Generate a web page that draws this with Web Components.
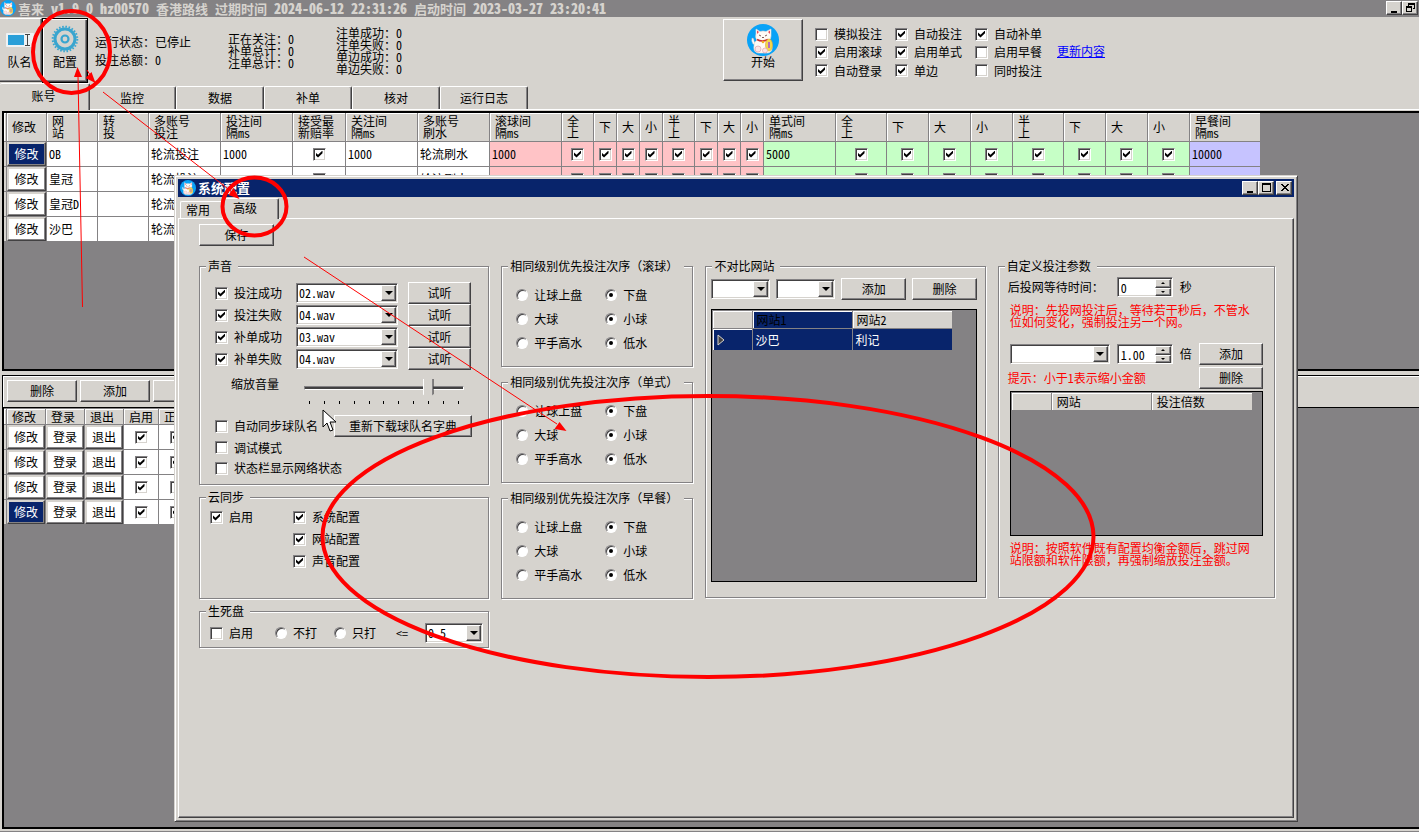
<!DOCTYPE html>
<html lang="zh-CN">
<head>
<meta charset="utf-8">
<title>喜来 v1.9.0</title>
<style>
  html, body { margin: 0; height: 100%; }
  body {
    --face: #d6d3ce; --shade: #848284; --dark: #424142; --navy: #08246b;
    background: var(--face); color: #000; overflow: hidden;
    font: 12px/12px "Noto Sans CJK SC", "Liberation Sans", sans-serif;
    font-feature-settings: "hwid";
  }
</style>
</head>
<body>
<main-window></main-window>
<config-dialog></config-dialog>
<mark-layer></mark-layer>

<script>
const BASE = `
  *, *::before, *::after { box-sizing: border-box; }
  button, input, select { font: inherit; font-feature-settings: inherit; color: inherit; margin: 0; border-radius: 0; }
  button { padding: 0; border: 1px solid; border-color: #fff var(--dark) var(--dark) #fff; box-shadow: inset -1px -1px 0 var(--shade); background: var(--face); }
  input[type=checkbox] { appearance: none; flex: none; width: 13px; height: 13px; background: #fff; display: grid; place-items: center;
    border: 1px solid; border-color: var(--shade) #fff #fff var(--shade); box-shadow: inset 1px 1px 0 var(--dark), inset -1px -1px 0 var(--face); }
  input[type=checkbox]:checked::before { content: ""; width: 7px; height: 7px; background: #000;
    clip-path: polygon(0 28%, 36% 60%, 100% 0, 100% 40%, 36% 100%, 0 68%); }
  input[type=radio] { appearance: none; flex: none; width: 12px; height: 12px; border-radius: 50%; background: #fff; display: grid; place-items: center;
    border: 1px solid; border-color: var(--shade) #fff #fff var(--shade); box-shadow: inset 1px 1px 0 var(--dark); }
  input[type=radio]:checked::before { content: ""; width: 4px; height: 4px; border-radius: 50%; background: #000; }
  label { white-space: nowrap; }
`;
function define(name, css, html) {
  const template = document.createElement('template');
  customElements.define(name, class extends HTMLElement {
    constructor() {
      super();
      const root = this.attachShadow({ mode: 'open' });
      const attr = (n, d = '') => this.getAttribute(n) ?? d;
      template.innerHTML = `<style>${BASE}${css}</style>` + (typeof html === 'function' ? html(attr) : html);
      root.append(template.content.cloneNode(true));
    }
  });
}

/* Lucky cat in a blue disc */
define('cat-logo', `:host { display: block; width: 16px; height: 16px; flex: none; border-radius: 50%; background: #08a2f7; } svg { display: block; width: 100%; height: 100%; }`, `
  <svg viewBox="0 0 32 32" aria-hidden="true">
    <path d="M6 20q-2-3-1-6 2 0 2 3l2 4z" fill="#fff" stroke="#cbb" stroke-width=".5"/>
    <path d="M9 5l4 2.500q3-1 6 0L24 5v7q0 3-2 4 3 2 3 6 1 6-4 7H11q-5-1-4-7 0-4 3-6-2-2-1-6z" fill="#fffaf5" stroke="#e8d8d0" stroke-width=".6"/>
    <path d="M10 6.500l2 1.500-2 2zM23 6.500l-2 1.500 2 2z" fill="#f04858"/>
    <path d="M12 11l2 1M18 12l2-1M15 13.500h2" stroke="#704848" stroke-width=".9" fill="none"/>
    <path d="M10 15.500q5 3 11 0" stroke="#d03030" stroke-width="1.600" fill="none"/>
    <circle cx="16" cy="18" r="1.300" fill="#f0b020"/>
    <ellipse cx="22" cy="21" rx="3.500" ry="6" fill="#f3d84c" stroke="#dba830" stroke-width=".6"/>
    <path d="M22 18v6" stroke="#b060c8" stroke-width="1.800"/>
    <circle cx="11" cy="25" r="3" fill="#fde4e4" stroke="#e0a0a8" stroke-width=".7"/>
    <circle cx="18" cy="26.500" r="2.500" fill="#fde4e4" stroke="#e0a0a8" stroke-width=".7"/>
  </svg>`);

/* Caption buttons of a window */
define('caption-button', `
  :host { display: block; width: 16px; height: 14px; }
  button { display: block; width: 100%; height: 100%; } svg { display: block; margin: 0 auto; }`,
  a => {
    const glyph = {
      min: ['最小化', '<path d="M3 9h6v2H3z"/>'],
      max: ['最大化', '<path d="M2 1h9v9H2zM3 3v6h7V3z" fill-rule="evenodd"/>'],
      restore: ['还原', '<path d="M4 1h7v6H9V6h1V3H5v1H4zM2 4h6v6H2zM3 6v3h4V6z" fill-rule="evenodd"/>'],
      close: ['关闭', '<path d="M2 2h2l2.500 2.500L9 2h2L7.500 5.500 11 9H9L6.500 6.500 4 9H2l3.500-3.500z"/>']
    }[a('kind')];
    return `<button type="button" aria-label="${glyph[0]}"><svg width="13" height="12" viewBox="0 0 13 12" shape-rendering="crispEdges">${glyph[1]}</svg></button>`;
  });

define('push-button', `:host { display: block; height: 22px; } button { display: block; width: 100%; height: 100%; white-space: nowrap; }`,
  `<button type="button"><slot></slot></button>`);

define('check-box', `:host { display: block; } label { display: flex; align-items: center; gap: 6px; }`,
  a => `<label><input type="checkbox" ${a('on', null) !== null ? 'checked' : ''}><span><slot></slot></span></label>`);

define('combo-box', `
  :host { display: grid; height: 20px; }
  select, i { grid-area: 1 / 1; }
  select { appearance: none; min-width: 0; width: 100%; height: 100%; padding: 0 20px 0 2px; background: #fff; outline: 0;
    border: 1px solid; border-color: var(--shade) #fff #fff var(--shade); box-shadow: inset 1px 1px 0 var(--dark), inset -1px -1px 0 var(--face); }
  i { justify-self: end; pointer-events: none; width: 15px; margin: 2px; background: var(--face); display: grid; place-items: center;
    border: 1px solid; border-color: #fff var(--dark) var(--dark) #fff; box-shadow: inset -1px -1px 0 var(--shade); }
  i::before { content: ""; border: 4px solid transparent; border-top-color: #000; border-bottom: 0; }`,
  a => `<select aria-label="${a('label')}"><option>${a('value')}</option></select><i></i>`);

define('spin-box', `
  :host { display: grid; grid-template-columns: 1fr 16px; width: 56px; height: 20px; background: #fff; padding: 1px;
    border: 1px solid; border-color: var(--shade) #fff #fff var(--shade); box-shadow: inset 1px 1px 0 var(--dark), inset -1px -1px 0 var(--face); }
  input { appearance: textfield; min-width: 0; width: 100%; border: 0; padding: 0 2px; background: none; outline: 0; }
  input::-webkit-inner-spin-button { display: none; }
  div { display: grid; grid-template-rows: 1fr 1fr; }
  button { display: grid; place-items: center; min-height: 0; }
  button::before { content: ""; border: 2px solid transparent; border-bottom-color: #000; border-top: 0; }
  button + button::before { border: 2px solid transparent; border-top-color: #000; border-bottom: 0; }`,
  a => `<input type="number" step="0.01" value="${a('value')}" aria-label="${a('label')}"><div><button type="button" aria-label="增加"></button><button type="button" aria-label="减少"></button></div>`);

define('group-box', `
  :host { display: flex; flex-direction: column; min-width: 0; }
  fieldset { flex: 1; min-width: 0; margin: 0; padding: 0; border: 1px solid var(--shade); box-shadow: 1px 1px 0 #fff, inset 1px 1px 0 #fff; }
  legend { margin-left: 6px; padding: 0 6px 0 2px; background: var(--face); white-space: nowrap; font-feature-settings: normal; }`,
  a => `<fieldset><legend>${a('caption')}</legend><slot></slot></fieldset>`);

/* Betting priority: three either-or choices */
define('priority-group', `
  :host { display: flex; flex-direction: column; min-height: 107px; }
  group-box { flex: 1; }
  .rows { display: grid; grid-template-columns: 89px 1fr; grid-auto-rows: 24px; align-items: center; padding: 11px 0 0 14px; }
  label { display: flex; align-items: center; gap: 6px; }`,
  a => `<group-box caption="相同级别优先投注次序（${a('kind')}）"><div class="rows">${
    [['让球上盘', '下盘'], ['大球', '小球'], ['平手高水', '低水']].map(([l, r], i) =>
      `<label><input type="radio" name="p${i}">${l}</label><label><input type="radio" name="p${i}" checked>${r}</label>`).join('')
  }</div></group-box>`);

/* Data grids */
const GRID = `
  :host { display: block; overflow: hidden; background: var(--shade); min-height: 0; }
  table { border-collapse: separate; border-spacing: 0; table-layout: fixed; }
  th { font-weight: 400; text-align: left; padding: 0 0 0 5px; background: var(--face); white-space: nowrap; overflow: hidden;
    border-right: 1px solid var(--shade); border-bottom: 1px solid var(--shade); box-shadow: inset 1px 1px 0 #fff; }
  td { height: 25px; padding: 0 0 0 2px; background: #fff; white-space: nowrap; overflow: hidden;
    border-right: 1px solid var(--shade); border-bottom: 1px solid var(--shade); }
  td.pink { background: #ffc3c6; } td.green { background: #c6ffc6; } td.violet { background: #c6c3ff; }
  td.act { padding: 0; } td.act button { display: block; width: 100%; height: 24px; background: #fff;
    border-color: var(--face) var(--dark) var(--dark) var(--face); box-shadow: inset -1px -1px 0 var(--shade), inset 1px 1px 0 var(--face); }
  td.act button.sel { background: var(--navy); color: #fff; }
  td.box { padding: 0; } td.box input { margin: 0 auto; }
  th.rowhead, td.rowhead { padding: 0; background: var(--face); }`;
const col = ws => `<colgroup>${ws.map(w => `<col style="width:${w}px">`).join('')}</colgroup>`;
const sum = ws => ws.reduce((a, b) => a + b, 0);

define('site-grid', GRID + ` th { height: 29px; }`, () => {
  const heads = ['修改', '网<br>站', '转<br>投', '多账号<br>投注', '投注间<br>隔ms', '接受最<br>新赔率', '关注间<br>隔ms', '多账号<br>刷水', '滚球间<br>隔ms',
    '全<br>上', '下', '大', '小', '半<br>上', '下', '大', '小', '单式间<br>隔ms', '全<br>上', '下', '大', '小', '半<br>上', '下', '大', '小', '早餐间<br>隔ms'];
  const ws = [3, 40, 51, 51, 72, 72, 53, 72, 72, 72, 32, 23, 23, 23, 32, 23, 23, 23, 72, 51, 42, 42, 42, 51, 42, 42, 42, 71];
  const tick = '<input type="checkbox" aria-label="启用" checked>';
  const rows = [['OB', '1000', '轮流刷水', '5000', '10000'], ['皇冠', '', '轮流刷水', '', ''], ['皇冠D', '', '', '', ''], ['沙巴', '', '', '', '']];
  const row = ([n, ms, wash, single, early], i) => `<tr><td class="rowhead"></td><td class="act"><button type="button" class="${i ? '' : 'sel'}">修改</button></td><td>${n}</td><td></td>
    <td>轮流投注</td><td>${ms}</td><td class="box">${tick}</td><td>${ms}</td><td>${wash}</td><td class="pink">${ms}</td>
    ${`<td class="box pink">${tick}</td>`.repeat(8)}<td class="green">${single}</td>${`<td class="box green">${tick}</td>`.repeat(8)}<td class="violet">${early}</td></tr>`;
  return `<table style="width:${sum(ws)}px">${col(ws)}<thead><tr><th class="rowhead"></th>${heads.map(h => `<th>${h}</th>`).join('')}</tr></thead>
    <tbody>${rows.map(row).join('')}</tbody></table>`;
});

define('account-grid', GRID + ` th { height: 16px; }`, () => {
  const ws = [3, 39, 39, 39, 35, 36];
  const row = i => `<tr><td class="rowhead"></td>${['修改', '登录', '退出'].map((t, j) =>
    `<td class="act"><button type="button" class="${i === 3 && !j ? 'sel' : ''}">${t}</button></td>`).join('')}
    <td class="box"><input type="checkbox" aria-label="启用" checked></td><td class="box"><input type="checkbox" aria-label="正" ${i === 2 ? '' : 'checked'}></td></tr>`;
  return `<table style="width:${sum(ws)}px">${col(ws)}<thead><tr><th class="rowhead"></th>${['修改', '登录', '退出', '启用', '正'].map(h => `<th>${h}</th>`).join('')}</tr></thead>
    <tbody>${[0, 1, 2, 3].map(row).join('')}</tbody></table>`;
});

define('pair-grid', GRID + `
  :host { border: 1px solid #000; padding: 1px; }
  th { height: 18px; padding-left: 3px; } td { height: 22px; background: var(--navy); color: #fff; }
  th.sel { background: var(--navy); } td.rowhead { background: var(--navy); padding-left: 4px; box-shadow: inset 1px 1px 0 #fff; }
  svg { display: block; }`, () => {
  const ws = [40, 100, 100];
  return `<table style="width:240px">${col(ws)}<thead><tr><th class="rowhead"></th><th class="sel">网站1</th><th>网站2</th></tr></thead>
    <tbody><tr><td class="rowhead"><svg width="9" height="12" aria-hidden="true"><path d="M1 1v10l6-5z" fill="#424142" stroke="#d6d3ce"/></svg></td><td>沙巴</td><td>利记</td></tr></tbody></table>`;
});

define('ratio-grid', GRID + ` :host { border: 1px solid #000; padding: 1px; } th { height: 17px; border-bottom: 0; } th:last-child { border-right: 0; }`, () => {
  const ws = [40, 100, 100];
  return `<table style="width:240px">${col(ws)}<thead><tr><th class="rowhead"></th><th>网站</th><th>投注倍数</th></tr></thead></table>`;
});

/* Toolbar */
define('tool-bar', `
  :host { display: flex; align-items: flex-start; padding-top: 1px; height: 66px; overflow: hidden; }
  button.big { flex: none; display: flex; flex-direction: column; align-items: center; background: var(--face); }
  .team { width: 42px; height: 64px; padding: 14px 2px 0 0; gap: 9px; border-left: 0; }
  .conf { width: 46px; height: 65px; padding: 6px 0 0 0; gap: 3px; border: 1px solid #000; box-shadow: inset 1px 1px 0 #fff, inset -1px -1px 0 var(--dark), inset -2px -2px 0 var(--shade); }
  .start { width: 80px; height: 62px; padding: 4px 0 0 0; margin-top: 1px; }
  .start cat-logo { width: 32px; height: 32px; }
  .stats { display: grid; grid-template-columns: 133px 108px 1fr; width: 635px; padding: 9px 0 0 7px; }
  .stats div { white-space: pre-line; }
  .a { line-height: 18px; padding-top: 6px; } .b { padding-top: 6px; }
  .opts { display: grid; grid-template-columns: repeat(3, 80px); grid-auto-rows: 18px; align-items: center; margin: 7px 0 0 12px; }
  .opts :nth-child(n+7) { margin-top: 1px; }
  a { color: #00f; margin: 27px 0 0 2px; white-space: nowrap; }
  svg { display: block; }`, () => {
  const opts = [['模拟投注', 0], ['自动投注', 1], ['自动补单', 1], ['启用滚球', 1], ['启用单式', 1], ['启用早餐', 0], ['自动登录', 1], ['单边', 1], ['同时投注', 0]];
  return `<button type="button" class="big team"><svg width="28" height="14" aria-hidden="true"><rect width="28" height="14" rx="1" fill="#eef2f4"/><rect x="2" y="2" width="16" height="10" fill="#2a9fd8"/><path d="M19 1.500h5M21.500 1.500v11M19 12.500h5" stroke="#444" fill="none"/></svg><span>队名</span></button>
  <button type="button" class="big conf"><svg width="28" height="28" viewBox="-14 -14 28 28" aria-hidden="true"><g fill="none" stroke="#39a5cf"><circle r="12.300" stroke-width="2" stroke-dasharray="1.600 1.620"/><circle r="10" stroke-width="3"/><circle r="3.500" stroke-width="2.200"/></g></svg><span>配置</span></button>
  <div class="stats"><div class="a">运行状态：已停止\n投注总额：0</div><div class="b">正在关注：0\n补单总计：0\n注单总计：0</div><div>注单成功：0\n注单失败：0\n单边成功：0\n单边失败：0</div></div>
  <button type="button" class="big start"><cat-logo></cat-logo><span>开始</span></button>
  <div class="opts">${opts.map(([t, c]) => `<check-box ${c ? 'on' : ''}>${t}</check-box>`).join('')}</div>
  <a href="#news">更新内容</a>`;
});

/* Main window */
define('main-window', `
  :host { display: flex; flex-direction: column; height: 100vh; }
  header { display: flex; align-items: flex-start; flex: none; height: 17px; background: var(--shade); color: var(--face); padding-right: 1px; font-size: 13px; line-height: 17px; font-weight: 700; }
  header span { flex: 1; padding-left: 2px; white-space: pre; } header b { font-size: 14px; }
  header caption-button { margin-top: 1px; }
  nav { display: flex; align-items: flex-end; flex: none; height: 27px; border-bottom: 1px solid #fff; }
  nav button { width: 88px; height: 23px; border-width: 1px 1px 0 1px; box-shadow: inset -1px 0 0 var(--shade); border-radius: 2px 2px 0 0; }
  nav button[aria-selected=true] { width: 90px; height: 27px; margin: 0 -2px -1px 0; padding: 0 2px 2px 0; border-left: 0; z-index: 1; }
  site-grid { flex: 256 1 0; margin: 1px 0 4px 2px; border: 2px solid #000; border-right: 0; }
  section { flex: 453 1 0; display: flex; flex-direction: column; margin-left: 2px; border: 1px solid #000; border-right: 0; border-bottom: 0; min-height: 0; }
  .bar { display: flex; gap: 3px; padding: 4px; height: 31px; flex: none; box-shadow: inset 1px 1px 0 #fff; }
  .bar push-button { width: 70px; }
  account-grid { flex: 1; border: solid #000; border-width: 1px 0 2px 1px; padding: 1px 0 0 0; }
  footer { height: 3px; flex: none; border-bottom: 1px solid var(--shade); }`, `
  <header><cat-logo></cat-logo><span>喜来<b> v1.9.0 hz00570 </b>香港路线<b> </b>过期时间<b> 2024-06-12 22:31:26 </b>启动时间<b> 2023-03-27 23:20:41</b></span><caption-button kind="min"></caption-button><caption-button kind="restore"></caption-button></header>
  <tool-bar></tool-bar>
  <nav role="tablist"><button role="tab" aria-selected="true">账号</button><button role="tab">监控</button><button role="tab">数据</button><button role="tab">补单</button><button role="tab">核对</button><button role="tab">运行日志</button></nav>
  <site-grid></site-grid>
  <section><div class="bar"><push-button>删除</push-button><push-button>添加</push-button><push-button>修改</push-button></div><account-grid></account-grid></section>
  <footer></footer>`);

/* Groups of the dialog */
define('sound-group', `
  :host { display: flex; flex-direction: column; } group-box { flex: 1; }
  .files { display: grid; grid-template-columns: 81px 112px 63px; grid-auto-rows: 22px; align-items: center; padding: 10px 0 0 15px; }
  .files combo-box { width: 102px; }
  .vol { display: flex; padding: 8px 0 0 31px; gap: 25px; }
  .slide { width: 160px; }
  input[type=range] { display: block; appearance: none; background: none; width: 160px; height: 20px; outline: 0; }
  input[type=range]::-webkit-slider-runnable-track { height: 4px; border: 1px solid; border-color: var(--shade) #fff #fff var(--shade); background: var(--dark); background-clip: padding-box; }
  input[type=range]::-webkit-slider-thumb { appearance: none; width: 11px; height: 20px; margin-top: -8px; border: 0;
    background: linear-gradient(90deg, #fff 1px, var(--face) 1px 9px, var(--shade) 9px 10px, var(--dark) 10px); clip-path: polygon(0 0, 100% 0, 100% 75%, 50% 100%, 0 75%); }
  .ticks { display: flex; justify-content: space-between; padding: 0 5px; margin-top: 3px; }
  .ticks i { width: 1px; height: 3px; background: #000; }
  .more { display: grid; grid-template-columns: 119px 138px; grid-template-rows: 22px 21px 20px; align-items: center; padding: 11px 0 0 15px; }
  .more check-box { width: 119px; }`,
  () => `<group-box caption="声音"><div class="files">${[['投注成功', '02'], ['投注失败', '04'], ['补单成功', '03'], ['补单失败', '04']].map(([t, f]) =>
    `<check-box on>${t}</check-box><combo-box label="${t}" value="${f}.wav"></combo-box><push-button>试听</push-button>`).join('')}</div>
  <div class="vol"><label for="v">缩放音量</label><div class="slide"><input id="v" type="range" min="0" max="10" value="8"><div class="ticks">${'<i></i>'.repeat(11)}</div></div></div>
  <div class="more"><check-box>自动同步球队名</check-box><push-button>重新下载球队名字典</push-button><check-box>调试模式</check-box><span></span><check-box>状态栏显示网络状态</check-box></div></group-box>`);

define('cloud-group', `
  :host { display: flex; flex-direction: column; } group-box { flex: 1; }
  .g { display: grid; grid-template-columns: 83px 1fr; padding: 3px 0 0 10px; }
  .g div { display: grid; grid-auto-rows: 22px; align-items: center; } `, `
  <group-box caption="云同步"><div class="g"><div><check-box on>启用</check-box></div><div><check-box on>系统配置</check-box><check-box on>网站配置</check-box><check-box on>声音配置</check-box></div></div></group-box>`);

define('deadball-group', `
  :host { display: flex; flex-direction: column; } group-box { flex: 1; }
  .g { display: flex; align-items: center; padding: 6px 0 0 10px; }
  .g > check-box { width: 65px; } .g label { display: flex; align-items: center; gap: 6px; width: 59px; } .g span { width: 32px; padding-left: 3px; }
  combo-box { width: 58px; }`, `
  <group-box caption="生死盘"><div class="g"><check-box>启用</check-box><label><input type="radio" name="d">不打</label><label><input type="radio" name="d">只打</label><span>&lt;=</span><combo-box label="阈值" value="0.5"></combo-box></div></group-box>`);

define('compare-group', `
  :host { display: flex; flex-direction: column; } group-box { flex: 1; }
  .top { display: flex; align-items: center; gap: 6px; padding: 6px 8px 9px 5px; }
  combo-box { width: 59px; } push-button { flex: 1; }
  pair-grid { height: 273px; margin: 0 8px 0 5px; }`, `
  <group-box caption="不对比网站"><div class="top"><combo-box label="网站1"></combo-box><combo-box label="网站2"></combo-box><push-button>添加</push-button><push-button>删除</push-button></div><pair-grid></pair-grid></group-box>`);

define('custom-group', `
  :host { display: flex; flex-direction: column; } group-box { flex: 1; }
  .line { display: flex; align-items: center; height: 24px; padding: 0 11px 0 11px; gap: 7px; }
  .wait { padding: 0 0 0 9px; margin-top: 4px; height: 22px; } .wait > :first-child { width: 102px; }
  combo-box { width: 100px; } push-button { width: 64px; margin-left: auto; }
  p { margin: 0; color: #f00; } .note { padding: 6px 11px 14px 11px; white-space: pre; font-feature-settings: normal; }
  .hint { padding-left: 9px; }
  .foot { padding: 6px 11px; } ratio-grid { height: 145px; margin: 1px 11px 0; }`, `
  <group-box caption="自定义投注参数"><div class="line wait"><span>后投网等待时间：</span><spin-box label="后投网等待时间" value="0"></spin-box><span>秒</span></div>
  <p class="note">说明：先投网投注后，等待若干秒后，不管水\n位如何变化，强制投注另一个网。</p>
  <div class="line"><combo-box label="网站"></combo-box><spin-box label="倍数" value="1.00"></spin-box><span>倍</span><push-button>添加</push-button></div>
  <div class="line hint"><p>提示：小于1表示缩小金额</p><push-button>删除</push-button></div>
  <ratio-grid></ratio-grid>
  <p class="note foot">说明：按照软件既有配置均衡金额后，跳过网\n站限额和软件限额，再强制缩放投注金额。</p></group-box>`);

/* The floating configuration window */
define('config-dialog', `
  :host { position: absolute; inset: 175px 121px 10px 174px; display: flex; flex-direction: column; background: var(--face); padding: 3px;
    border: 1px solid; border-color: var(--face) var(--dark) var(--dark) var(--face); box-shadow: inset 1px 1px 0 #fff, inset -1px -1px 0 var(--shade); }
  header { display: flex; align-items: center; flex: none; height: 18px; background: var(--navy); color: #fff; font-size: 13px; font-weight: 700; padding: 0 2px; }
  header span { flex: 1; padding-left: 2px; } header :last-child { margin-left: 2px; }
  nav { display: flex; align-items: flex-end; flex: none; height: 21px; padding-left: 2px; }
  nav button { text-align: left; height: 17px; width: 42px; padding-left: 5px; border-width: 1px 0 0 1px; box-shadow: none; border-radius: 2px 0 0 0; }
  nav button[aria-selected=true] { height: 21px; width: 57px; padding: 0 0 2px 10px; margin-bottom: -1px; z-index: 1; border-right-width: 1px; box-shadow: inset -1px 0 0 var(--shade); border-radius: 2px 2px 0 0; }
  .page { flex: 1; min-height: 0; padding: 5px 18px 0 20px; border: 1px solid; border-color: #fff var(--dark) var(--dark) #fff; box-shadow: inset -1px -1px 0 var(--shade); }
  .page > push-button { width: 75px; }
  .cols { display: grid; grid-template-columns: minmax(290px, 290fr) minmax(192px, 192fr) minmax(280px, 280fr) minmax(277px, 277fr); column-gap: 12px; margin-top: 14px; align-items: start; }
  .col { display: flex; flex-direction: column; gap: 9px; }
  .col:first-child { gap: 6px; }
  sound-group { min-height: 225px; } cloud-group { min-height: 108px; } deadball-group { min-height: 43px; }
  compare-group, custom-group { min-height: 338px; }`, `
  <header><cat-logo></cat-logo><span>系统配置</span><caption-button kind="min"></caption-button><caption-button kind="max"></caption-button><caption-button kind="close"></caption-button></header>
  <nav role="tablist"><button role="tab">常用</button><button role="tab" aria-selected="true">高级</button></nav>
  <div class="page"><push-button>保存</push-button>
    <div class="cols">
      <div class="col"><sound-group></sound-group><cloud-group></cloud-group><deadball-group></deadball-group></div>
      <div class="col"><priority-group kind="滚球"></priority-group><priority-group kind="单式"></priority-group><priority-group kind="早餐"></priority-group></div>
      <compare-group></compare-group><custom-group></custom-group>
    </div></div>`);

/* Red pen marks and the mouse pointer */
define('mark-layer', `:host { position: absolute; inset: 0; z-index: 2; pointer-events: none; overflow: hidden; } svg { display: block; }`, `
  <svg width="1419" height="832" aria-hidden="true">
    <path d="M323 410v17l4-4 3 8 3-1-3-8h6z" fill="#fff" stroke="#000"/>
    <g fill="none" stroke="#f00" stroke-width="4">
      <ellipse cx="71.500" cy="52" rx="38.500" ry="41"/><ellipse cx="254.500" cy="206.500" rx="32" ry="29"/><ellipse cx="708" cy="536.500" rx="385.500" ry="140.500"/>
    </g>
    <path d="M82.500 307L78 76M87 70l5 8M103 92L232 192M304 257L557 424" fill="none" stroke="#f00"/>
    <path d="M77.500 67l4.500 10h-8zM95.500 83l-10-5 6-6zM239.500 199l-11-4 5-7zM566.500 431l-12-2 5-7z" fill="#f00"/>
  </svg>`);
</script>
</body>
</html>
